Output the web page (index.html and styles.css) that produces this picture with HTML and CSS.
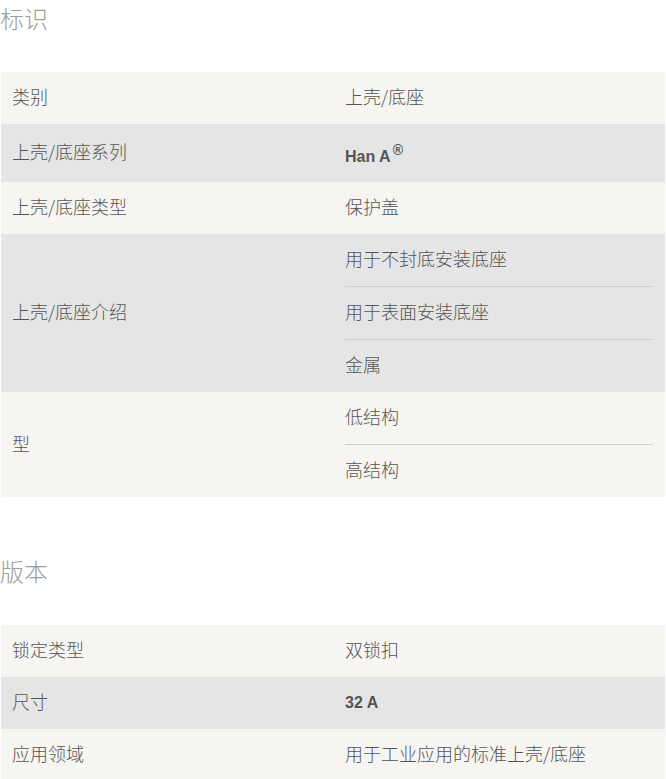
FILE: index.html
```html
<!DOCTYPE html>
<html lang="zh">
<head>
<meta charset="utf-8">
<title>标识</title>
<link rel="stylesheet" href="styles.css">
</head>
<body>
<section class="section">
  <h2 class="heading">标识</h2>
  <div class="table">
    <div class="row light">
      <div class="key">类别</div>
      <div class="vals"><div class="val">上壳/底座</div></div>
    </div>
    <div class="row dark">
      <div class="key">上壳/底座系列</div>
      <div class="vals"><div class="val latin tall"><span>Han A<sup class="reg">®</sup></span></div></div>
    </div>
    <div class="row light">
      <div class="key">上壳/底座类型</div>
      <div class="vals"><div class="val">保护盖</div></div>
    </div>
    <div class="row dark">
      <div class="key">上壳/底座介绍</div>
      <div class="vals">
        <div class="val">用于不封底安装底座</div>
        <div class="val">用于表面安装底座</div>
        <div class="val">金属</div>
      </div>
    </div>
    <div class="row light">
      <div class="key">型</div>
      <div class="vals">
        <div class="val">低结构</div>
        <div class="val">高结构</div>
      </div>
    </div>
  </div>
</section>
<section class="section">
  <h2 class="heading">版本</h2>
  <div class="table">
    <div class="row light">
      <div class="key">锁定类型</div>
      <div class="vals"><div class="val">双锁扣</div></div>
    </div>
    <div class="row dark">
      <div class="key">尺寸</div>
      <div class="vals"><div class="val latin">32 A</div></div>
    </div>
    <div class="row light">
      <div class="key">应用领域</div>
      <div class="vals"><div class="val">用于工业应用的标准上壳/底座</div></div>
    </div>
  </div>
</section>
</body>
</html>
```

FILE: styles.css
```css
html, body {
  margin: 0;
  padding: 0;
  background: #ffffff;
}
body {
  padding: 0 1px;
  font-family: "Noto Sans CJK SC", "Liberation Sans", sans-serif;
  font-size: 18px;
  font-weight: 300;
  color: #555555;
}
.section + .section {
  margin-top: 56px;
}
.heading {
  margin: 0 0 36px -1px;
  font-size: 24px;
  line-height: 36px;
  font-weight: 300;
  color: #9d9d9d;
}
.row {
  display: grid;
  grid-template-columns: 1fr 1fr;
}
.row.light {
  background: #f6f5f2;
}
.row.dark {
  background: #e5e5e5;
}
.key {
  display: flex;
  align-items: center;
  padding: 0 11px 4px;
  line-height: 28px;
}
.vals {
  padding: 0 12px;
  display: flex;
  flex-direction: column;
}
.val {
  height: 52px;
  box-sizing: border-box;
  display: flex;
  align-items: center;
  line-height: 28px;
  padding-bottom: 4px;
}
.val + .val {
  height: 53px;
  border-top: 1px solid #cfcfcf;
}
.latin {
  font-family: "Liberation Sans", Arial, sans-serif;
  font-weight: 700;
  font-size: 16px;
  padding-bottom: 0;
}
.val.tall {
  height: 58px;
  align-items: flex-end;
  padding-bottom: 11px;
}
.reg {
  font-size: 14px;
  line-height: 0;
  vertical-align: 7px;
  margin-left: 2px;
  font-weight: 700;
}
```
